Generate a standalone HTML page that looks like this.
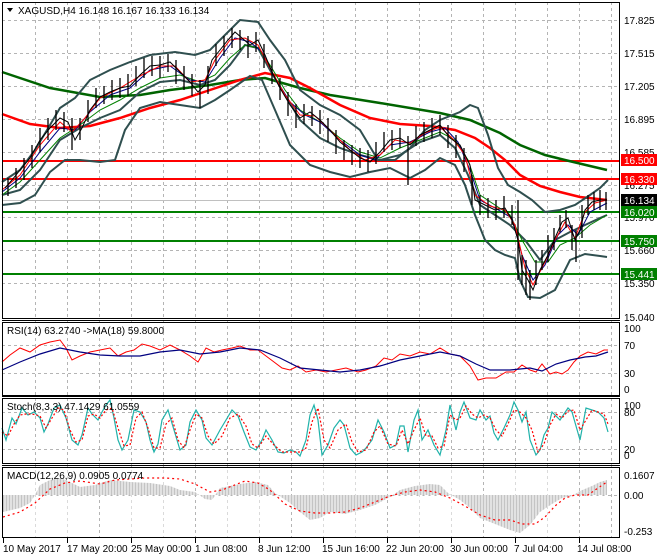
<!DOCTYPE html>
<html><head><meta charset="utf-8"><style>
body{margin:0;background:#fff;}
svg{display:block;font-family:"Liberation Sans",sans-serif;font-size:10px;}
</style></head><body>
<svg width="660" height="560" viewBox="0 0 660 560" xmlns="http://www.w3.org/2000/svg">
<rect width="660" height="560" fill="#fff"/>
<g stroke="#b4b4b4" stroke-dasharray="3,3" stroke-width="1" fill="none">
<path d="M35.5 2V538M67.5 2V538M99.5 2V538M131.5 2V538M163.5 2V538M195.5 2V538M227.5 2V538M259.5 2V538M291.5 2V538M323.5 2V538M355.5 2V538M387.5 2V538M419.5 2V538M451.5 2V538M483.5 2V538M515.5 2V538M547.5 2V538M579.5 2V538M611.5 2V538"/>
<path d="M2 20.5H620M2 53.5H620M2 86.5H620M2 119.5H620M2 152.5H620M2 185.5H620M2 217.5H620M2 250.5H620M2 283.5H620"/>
<path d="M2 345.5H620M2 373.5H620M2 412.5H620M2 449.5H620M2 495.5H620"/>
</g>
<!-- horizontal level lines -->
<g stroke-width="2" fill="none">
<path d="M2 161H620M2 179H620" stroke="#ff0000"/>
<path d="M2 212H620M2 241H620M2 274H620" stroke="#008000"/>
</g>
<path d="M2 200.5H620" stroke="#c0c0c0"/>
<!-- long MAs -->
<polyline fill="none" stroke="#006400" stroke-width="2.5" points="2,72 50,88 100,97 140,95 170,90 210,85 240,80 265,78 300,88 330,95 380,103 440,113 470,120 500,133 520,145 545,155 565,160 590,166 607,170"/>
<polyline fill="none" stroke="#ff0000" stroke-width="2.5" points="2,114 30,124 60,128 90,126 120,118 150,108 180,100 210,90 240,80 265,73 290,78 310,88 340,105 370,118 400,124 430,126 455,130 475,138 490,148 505,160 520,175 540,186 560,192 580,197 607,200"/>
<!-- bollinger -->
<g fill="none" stroke="#2f4f4f" stroke-width="2">
<polyline points="2,182 20,170 35,150 50,125 60,108 75,98 90,80 110,70 130,62 150,55 175,52 195,55 210,50 225,35 240,20 258,22 270,40 285,60 300,90 320,105 340,115 360,130 378,160 395,160 410,148 425,130 440,120 460,112 470,105 478,108 488,135 498,168 508,185 520,192 532,200 545,212 560,210 575,205 590,195 600,188 608,180"/>
<polyline points="2,205 20,203 35,195 50,172 65,160 80,160 100,162 115,160 125,130 140,108 160,102 180,105 200,108 215,100 230,90 250,76 262,80 275,110 290,145 310,165 330,172 350,177 370,172 390,168 410,178 425,170 440,158 455,165 465,185 475,215 485,240 495,250 505,255 515,258 520,280 528,297 540,298 555,290 570,260 585,254 600,256 607,257"/>
<polyline points="2,195 20,190 40,170 60,140 80,128 100,118 120,110 140,92 160,82 180,80 200,85 215,80 230,65 245,45 258,48 270,70 285,95 300,120 320,138 340,148 360,155 380,160 400,155 420,142 440,135 455,148 468,175 480,205 495,215 510,225 525,240 540,260 555,240 570,232 585,225 600,218 607,215"/>
</g>
<!-- short MAs -->
<polyline fill="none" stroke="#008000" stroke-width="1" points="2,195 20,182 40,160 60,138 80,125 100,110 120,100 140,88 160,78 180,75 200,82 215,75 230,58 245,45 258,48 270,65 285,90 300,110 320,122 340,138 360,152 380,158 400,148 420,140 440,132 455,140 468,160 480,195 495,205 510,215 522,240 535,262 548,262 560,245 575,238 590,225 607,215"/>
<polyline fill="none" stroke="#000080" stroke-width="1" points="2,192 20,178 40,152 60,128 75,130 90,112 110,95 130,88 150,70 170,66 190,80 205,82 220,58 235,38 250,42 262,52 275,78 290,102 305,115 320,122 340,140 360,155 375,160 390,145 410,142 430,132 445,128 458,142 470,170 480,200 495,208 512,218 522,255 533,280 545,265 558,235 568,225 578,235 590,212 607,203"/>
<polyline fill="none" stroke="#ff0000" stroke-width="1" points="2,190 20,175 40,145 60,122 72,132 85,118 100,98 120,88 140,76 160,66 175,66 190,82 205,80 215,60 230,40 245,38 258,45 270,68 285,95 300,115 315,116 330,130 350,150 365,160 380,155 395,140 410,143 425,133 440,127 452,138 465,155 475,195 490,206 505,210 515,225 525,268 533,285 545,262 555,240 565,222 575,238 585,212 595,203 607,200"/>
<!-- price -->
<polyline fill="none" stroke="#000" stroke-width="1" points="5,188 12,180 20,170 30,158 40,140 50,128 60,118 68,122 75,140 82,128 90,110 100,97 110,92 120,88 130,86 140,75 150,66 160,65 170,62 180,72 190,82 198,92 205,85 212,60 220,50 228,40 235,32 242,38 250,45 258,40 265,55 272,72 280,88 290,105 300,118 310,112 320,120 330,130 340,142 350,150 360,158 370,162 380,152 390,140 400,138 410,145 420,135 430,130 440,125 450,138 460,145 470,165 475,200 485,205 495,210 505,208 512,220 518,240 522,270 528,280 533,290 540,270 548,255 555,238 562,222 568,218 575,240 580,230 585,210 592,202 600,200 607,200"/>
<g stroke="#000" stroke-width="1.3">
<path d="M8 178V196M16 168V188M24 158V180M32 145V168M40 128V152M48 118V140M56 110V130M64 112V132M72 118V150M80 118V140M88 100V122M96 88V108M104 86V104M112 80V100M120 78V98M128 74V96M136 66V86M144 58V78M152 56V76M160 56V78M168 54V72M176 60V84M184 66V90M192 74V96M200 80V108M208 66V94M216 44V66M224 36V56M232 28V48M240 30V50M248 36V58M256 32V52M264 44V68M272 60V84M280 78V100M288 92V116M296 104V128M304 104V124M312 106V126M320 110V134M328 118V142M336 130V154M344 140V160M352 145V165M360 148V168M368 150V172M376 142V164M384 132V152M392 130V150M400 128V148M408 136V185M416 126V146M424 122V142M432 118V138M440 115V135M448 125V148M456 135V158M464 148V172M472 175V205M480 195V215M488 198V218M496 200V220M504 196V218M512 205V225M518 200V280M522 255V285M526 260V295M530 270V300M536 260V285M542 250V270M548 235V262M554 228V250M560 215V232M566 210V228M572 225V250M576 230V262M582 205V238M588 195V215M594 192V210M600 190V210M606 192V210"/>
</g>
<!-- RSI -->
<polyline fill="none" stroke="#ff0000" stroke-width="1" points="2,362 10,355 20,348 30,352 40,345 50,342 60,340 66,348 72,360 80,356 90,352 100,350 110,348 118,356 126,352 134,350 142,344 150,346 160,350 170,345 180,350 190,356 198,362 206,348 214,352 222,350 232,348 240,346 250,350 258,350 266,356 274,362 282,368 290,370 298,366 306,372 316,370 326,372 336,370 346,368 358,372 366,370 376,366 384,358 392,360 400,354 410,356 420,352 430,354 440,348 450,354 460,356 470,366 478,380 486,378 496,378 506,372 514,372 522,365 530,370 536,372 542,364 550,374 556,372 562,374 568,370 574,362 580,356 588,352 596,354 604,350 608,350"/>
<polyline fill="none" stroke="#000080" stroke-width="1.2" points="2,370 20,362 40,354 60,348 80,352 100,355 120,356 140,356 160,352 180,350 200,354 220,352 240,348 260,350 280,358 300,368 320,370 340,372 360,370 380,366 400,360 420,356 440,352 460,356 476,364 490,370 510,370 530,368 542,371 556,364 570,360 585,357 596,356 608,352"/>
<!-- Stoch -->
<polyline fill="none" stroke="#20b2aa" stroke-width="1.2" points="2,428 6,440 12,418 16,424 22,408 28,415 34,412 40,418 44,432 48,424 54,408 60,405 66,418 72,440 78,445 82,435 88,408 92,414 98,420 102,412 106,405 110,400 114,418 118,440 122,450 128,440 134,410 140,412 146,422 150,440 154,452 158,444 162,420 168,410 174,430 180,450 186,445 190,422 196,410 202,420 206,438 212,445 220,430 226,420 232,410 238,416 244,432 250,447 256,450 262,440 266,430 272,440 278,452 284,453 290,450 296,452 300,456 306,440 310,415 314,405 318,420 322,455 328,445 334,428 340,420 344,425 350,448 356,455 362,452 366,448 372,440 378,420 384,432 390,448 396,445 400,426 404,426 408,452 414,420 418,410 422,440 428,430 434,445 440,455 446,430 450,405 456,430 460,412 464,402 470,418 476,420 480,410 486,420 490,416 494,433 498,440 504,428 510,415 514,402 518,410 522,422 526,412 530,440 536,455 540,450 544,435 548,428 552,412 556,416 560,420 564,414 568,408 572,412 580,440 586,408 592,410 598,412 604,418 608,432"/>
<polyline fill="none" stroke="#ff0000" stroke-width="1.2" stroke-dasharray="2,2" points="2,432 8,436 14,424 20,415 26,414 32,414 40,416 46,428 52,418 58,408 64,410 70,430 76,442 82,440 88,416 94,414 100,418 106,410 112,408 118,428 124,446 130,445 136,418 142,412 148,428 154,448 160,448 166,424 172,418 178,440 184,448 190,430 196,414 202,418 208,436 214,444 222,436 230,418 238,414 246,426 252,444 258,448 266,436 274,445 282,452 292,452 300,452 306,448 312,422 318,408 324,440 330,448 338,430 346,424 352,442 358,452 366,450 374,432 380,426 388,444 396,446 402,430 408,444 414,430 420,418 426,436 432,436 438,448 444,446 450,415 456,420 460,418 466,406 472,414 478,418 484,415 490,418 496,430 502,436 508,424 514,410 520,412 526,418 532,430 538,452 544,444 550,425 556,414 562,418 568,411 574,410 580,430 586,420 592,410 598,412 604,414 608,424"/>
<!-- MACD histogram -->
<polygon fill="#c4c4c4" points="3,495 3,512 20,508 30,503 35,495 40,485 50,480 60,478 70,482 80,487 95,485 110,480 130,482 150,483 170,486 180,490 195,492 205,499 212,500 220,488 240,484 255,482 268,485 275,493 290,503 300,512 310,520 320,518 330,512 345,514 360,510 375,505 390,497 400,490 415,486 430,484 440,485 448,493 460,500 470,508 480,518 495,524 510,530 520,533 530,525 540,512 552,504 562,498 572,496 580,491 592,486 600,482 607,480 607,495"/>
<g stroke="#fff" stroke-width="1"><path d="M5 470V540M8 470V540M11 470V540M14 470V540M17 470V540M20 470V540M23 470V540M26 470V540M29 470V540M32 470V540M35 470V540M38 470V540M41 470V540M44 470V540M47 470V540M50 470V540M53 470V540M56 470V540M59 470V540M62 470V540M65 470V540M68 470V540M71 470V540M74 470V540M77 470V540M80 470V540M83 470V540M86 470V540M89 470V540M92 470V540M95 470V540M98 470V540M101 470V540M104 470V540M107 470V540M110 470V540M113 470V540M116 470V540M119 470V540M122 470V540M125 470V540M128 470V540M131 470V540M134 470V540M137 470V540M140 470V540M143 470V540M146 470V540M149 470V540M152 470V540M155 470V540M158 470V540M161 470V540M164 470V540M167 470V540M170 470V540M173 470V540M176 470V540M179 470V540M182 470V540M185 470V540M188 470V540M191 470V540M194 470V540M197 470V540M200 470V540M203 470V540M206 470V540M209 470V540M212 470V540M215 470V540M218 470V540M221 470V540M224 470V540M227 470V540M230 470V540M233 470V540M236 470V540M239 470V540M242 470V540M245 470V540M248 470V540M251 470V540M254 470V540M257 470V540M260 470V540M263 470V540M266 470V540M269 470V540M272 470V540M275 470V540M278 470V540M281 470V540M284 470V540M287 470V540M290 470V540M293 470V540M296 470V540M299 470V540M302 470V540M305 470V540M308 470V540M311 470V540M314 470V540M317 470V540M320 470V540M323 470V540M326 470V540M329 470V540M332 470V540M335 470V540M338 470V540M341 470V540M344 470V540M347 470V540M350 470V540M353 470V540M356 470V540M359 470V540M362 470V540M365 470V540M368 470V540M371 470V540M374 470V540M377 470V540M380 470V540M383 470V540M386 470V540M389 470V540M392 470V540M395 470V540M398 470V540M401 470V540M404 470V540M407 470V540M410 470V540M413 470V540M416 470V540M419 470V540M422 470V540M425 470V540M428 470V540M431 470V540M434 470V540M437 470V540M440 470V540M443 470V540M446 470V540M449 470V540M452 470V540M455 470V540M458 470V540M461 470V540M464 470V540M467 470V540M470 470V540M473 470V540M476 470V540M479 470V540M482 470V540M485 470V540M488 470V540M491 470V540M494 470V540M497 470V540M500 470V540M503 470V540M506 470V540M509 470V540M512 470V540M515 470V540M518 470V540M521 470V540M524 470V540M527 470V540M530 470V540M533 470V540M536 470V540M539 470V540M542 470V540M545 470V540M548 470V540M551 470V540M554 470V540M557 470V540M560 470V540M563 470V540M566 470V540M569 470V540M572 470V540M575 470V540M578 470V540M581 470V540M584 470V540M587 470V540M590 470V540M593 470V540M596 470V540M599 470V540M602 470V540M605 470V540"/></g>
<polyline fill="none" stroke="#ff0000" stroke-width="1.2" stroke-dasharray="2,3" points="3,517 20,512 35,503 50,489 65,483 80,481 100,484 115,480 130,479 145,478 165,478 180,479 195,484 210,492 222,490 232,486 245,481 258,483 270,490 285,504 300,511 315,513 330,513 345,512 360,508 375,502 390,496 405,492 420,490 435,492 450,498 465,506 480,515 495,520 510,520 522,524 535,524 545,517 555,506 565,498 575,495 588,495 598,488 607,482"/>
<!-- panel borders -->
<g fill="none" stroke="#000" stroke-width="1">
<rect x="2.5" y="2.5" width="617" height="316"/>
<rect x="2.5" y="322.5" width="617" height="73"/>
<rect x="2.5" y="398.5" width="617" height="65"/>
<rect x="2.5" y="467.5" width="617" height="70"/>
<path d="M2 320.5H620M2 396.5H620M2 465.5H620"/>
</g>
<rect x="621" y="0" width="39" height="560" fill="#fff"/>
<!-- right axis -->
<g fill="#000">
<text x="624" y="24">17.825</text><text x="624" y="57">17.515</text><text x="624" y="90">17.205</text><text x="624" y="123">16.895</text><text x="624" y="156">16.585</text><text x="624" y="189">16.275</text><text x="624" y="221">15.970</text><text x="624" y="254">15.660</text><text x="624" y="287">15.350</text><text x="624" y="321">15.040</text>
<text x="624" y="332">100</text><text x="624" y="349">70</text><text x="624" y="377">30</text><text x="624" y="393">0</text>
<text x="624" y="409">100</text><text x="624" y="416">80</text><text x="624" y="453">20</text><text x="624" y="459">0</text>
<text x="624" y="479">0.1607</text><text x="624" y="499">0.00</text><text x="624" y="535">-0.253</text>
</g>
<g font-size="10">
<rect x="621" y="154" width="36" height="12" fill="#ff0000"/><text x="624" y="164" fill="#fff">16.500</text>
<rect x="621" y="173" width="36" height="12" fill="#ff0000"/><text x="624" y="183" fill="#fff">16.330</text>
<rect x="621" y="194" width="36" height="12" fill="#000"/><text x="624" y="204" fill="#fff">16.134</text>
<rect x="621" y="206" width="36" height="12" fill="#008000"/><text x="624" y="216" fill="#fff">16.020</text>
<rect x="621" y="235" width="36" height="12" fill="#008000"/><text x="624" y="245" fill="#fff">15.750</text>
<rect x="621" y="268" width="36" height="12" fill="#008000"/><text x="624" y="278" fill="#fff">15.441</text>
</g>
<!-- bottom axis -->
<g stroke="#000"><path d="M3.5 538V543M67.5 538V543M131.5 538V543M195.5 538V543M259.5 538V543M323.5 538V543M387.5 538V543M451.5 538V543M515.5 538V543M579.5 538V543"/></g>
<g fill="#000">
<text x="3" y="552">10 May 2017</text><text x="67" y="552">17 May 20:00</text><text x="131" y="552">25 May 00:00</text><text x="195" y="552">1 Jun 08:00</text><text x="258" y="552">8 Jun 12:00</text><text x="322" y="552">15 Jun 16:00</text><text x="386" y="552">22 Jun 20:00</text><text x="450" y="552">30 Jun 00:00</text><text x="514" y="552">7 Jul 04:00</text><text x="577" y="552">14 Jul 08:00</text>
</g>
<!-- labels -->
<path d="M7 8L13 8L10 12Z" fill="#000"/>
<text x="18" y="14" fill="#000">XAGUSD,H4  16.148 16.167 16.133 16.134</text>
<text x="7" y="334" fill="#000">RSI(14) 63.2740  -&gt;MA(18) 59.8000</text>
<text x="7" y="410" fill="#000">Stoch(8,3,3) 47.1429 61.0559</text>
<text x="7" y="479" fill="#000">MACD(12,26,9) 0.0905 0.0774</text>
</svg>
</body></html>
